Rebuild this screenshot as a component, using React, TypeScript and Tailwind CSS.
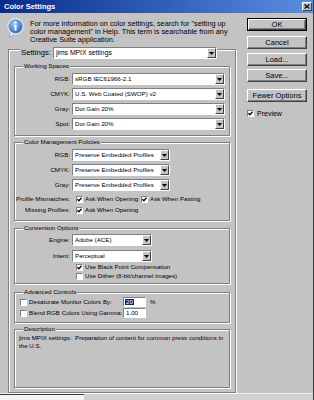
import type { ReactNode } from 'react';

const etched = 'border border-[#808080] shadow-[inset_1px_1px_0_#ffffff,1px_1px_0_#ffffff]';
const sunken = 'border border-t-[#808080] border-l-[#808080] border-b-white border-r-white';
const raised = 'border border-t-white border-l-white border-b-[#404040] border-r-[#404040]';

function Arrow() {
  return (
    <div className={`w-[9px] h-full shrink-0 bg-[#c3c3c3] ${raised} flex items-center justify-center`}>
      <svg width="5" height="3" viewBox="0 0 5 3">
        <path d="M0 0H5L2.5 3Z" fill="#000" />
      </svg>
    </div>
  );
}

function Combo({ value, className = '', text = 'text-[6.2px]' }: { value: string; className?: string; text?: string }) {
  return (
    <div className={`flex h-[12px] bg-white ${sunken} ${className}`}>
      <span className={`flex-1 pl-[2px] leading-[10px] whitespace-nowrap overflow-hidden ${text}`}>{value}</span>
      <Arrow />
    </div>
  );
}

function Check({ on }: { on?: boolean }) {
  return (
    <span className={`w-[7px] h-[7px] shrink-0 bg-white ${sunken} flex items-center justify-center`}>
      {on && (
        <svg width="5" height="5" viewBox="0 0 5 5">
          <path d="M0.4 2.2L1.9 3.8L4.6 0.8" stroke="#000" strokeWidth="1.3" fill="none" />
        </svg>
      )}
    </span>
  );
}

function Group({ title, className = '', children }: { title: string; className?: string; children?: ReactNode }) {
  return (
    <div className={`relative ${etched} ${className}`}>
      <span className="absolute left-[8px] top-[-5px] bg-[#c3c3c3] px-[1px] text-[6.2px] leading-[8px] whitespace-nowrap">
        {title}
      </span>
      {children}
    </div>
  );
}

function Label({ children }: { children: ReactNode }) {
  return <span className="w-[55px] shrink-0 text-right text-[6.2px] leading-none whitespace-nowrap">{children}</span>;
}

function Btn({ label, def, className = '' }: { label: string; def?: boolean; className?: string }) {
  return (
    <div className={`w-[60px] h-[13px] ${def ? 'border border-black' : ''} ${className}`}>
      <div className={`w-full h-full ${raised} shadow-[inset_-1px_-1px_0_#808080] flex items-center justify-center text-[7.5px] leading-none`}>
        {label}
      </div>
    </div>
  );
}

function InfoIcon() {
  return (
    <svg width="17" height="20" viewBox="0 0 17 20" className="shrink-0">
      <defs>
        <radialGradient id="ig" cx="0.4" cy="0.35" r="0.7">
          <stop offset="0" stopColor="#9cc8f4" />
          <stop offset="1" stopColor="#1d5cc4" />
        </radialGradient>
      </defs>
      <path d="M4 13.5L2 19.5L8.5 15.5Z" fill="#e8f0fa" stroke="#7a9cc8" strokeWidth="0.7" />
      <circle cx="8.5" cy="8.2" r="7.6" fill="url(#ig)" stroke="#e6eef8" strokeWidth="1.2" />
      <circle cx="8.5" cy="4.4" r="1.2" fill="#fff" />
      <rect x="7.5" y="6.6" width="2" height="6" fill="#fff" />
    </svg>
  );
}

export default function App() {
  return (
    <div className="w-[314px] h-[400px] overflow-hidden bg-[#c3c3c3] border-r border-r-[#3a3a3a] font-['Liberation_Sans',Arial,sans-serif] text-black">
      <div className="h-[13px] flex items-center justify-between bg-linear-to-r from-[#0a2a8c] to-[#5a8ee0] pl-[4px] pr-[1px]">
        <span className="text-white font-bold text-[7.5px] leading-none">Color Settings</span>
        <div className={`w-[10px] h-[9px] bg-[#c3c3c3] ${raised} flex items-center justify-center`}>
          <svg width="6" height="5" viewBox="0 0 6 5">
            <path d="M0.5 0.5L5.5 4.5M5.5 0.5L0.5 4.5" stroke="#000" strokeWidth="1.2" />
          </svg>
        </div>
      </div>

      <div className="flex h-[380px]">
        <div className="w-[244px] shrink-0">
          <div className="h-[36px] flex pl-[7px] pt-[5px]">
            <InfoIcon />
            <p className="ml-[6px] mt-[2px] text-[7.3px] leading-[8px] whitespace-nowrap">
              For more information on color settings, search for "setting up
              <br />
              color management" in Help. This term is searchable from any
              <br />
              Creative Suite application.
            </p>
          </div>

          <div className={`relative ml-[8px] w-[228px] h-[344px] ${etched} pl-[5px] pt-[16px]`}>
            <div className="absolute left-[11px] top-[-3px] flex items-center bg-[#c3c3c3] pl-[1px]">
              <span className="text-[7.7px] leading-none">Settings:</span>
              <Combo value="jims MPIX settings" className="ml-[2px] w-[164px]" text="text-[6.8px]" />
            </div>

            <Group title="Working Spaces" className="w-[216px] h-[70px] pt-[6px]">
              <div className="flex flex-col gap-[3px]">
                <div className="flex items-center h-[12px]">
                  <Label>RGB:</Label>
                  <Combo value="sRGB IEC61966-2.1" className="ml-[2px] w-[153px]" />
                </div>
                <div className="flex items-center h-[12px]">
                  <Label>CMYK:</Label>
                  <Combo value="U.S. Web Coated (SWOP) v2" className="ml-[2px] w-[153px]" />
                </div>
                <div className="flex items-center h-[12px]">
                  <Label>Gray:</Label>
                  <Combo value="Dot Gain 20%" className="ml-[2px] w-[153px]" />
                </div>
                <div className="flex items-center h-[12px]">
                  <Label>Spot:</Label>
                  <Combo value="Dot Gain 20%" className="ml-[2px] w-[153px]" />
                </div>
              </div>
            </Group>

            <Group title="Color Management Policies" className="mt-[6px] w-[216px] h-[79px] pt-[6px]">
              <div className="flex flex-col gap-[3px]">
                <div className="flex items-center h-[12px]">
                  <Label>RGB:</Label>
                  <Combo value="Preserve Embedded Profiles" className="ml-[2px] w-[98px]" />
                </div>
                <div className="flex items-center h-[12px]">
                  <Label>CMYK:</Label>
                  <Combo value="Preserve Embedded Profiles" className="ml-[2px] w-[98px]" />
                </div>
                <div className="flex items-center h-[12px]">
                  <Label>Gray:</Label>
                  <Combo value="Preserve Embedded Profiles" className="ml-[2px] w-[98px]" />
                </div>
              </div>
              <div className="flex items-center h-[10px] mt-[3px] text-[6.2px] leading-none">
                <Label>Profile Mismatches:</Label>
                <span className="ml-[6px]"><Check on /></span>
                <span className="ml-[2px] w-[56px] whitespace-nowrap">Ask When Opening</span>
                <Check on />
                <span className="ml-[2px] whitespace-nowrap">Ask When Pasting</span>
              </div>
              <div className="flex items-center h-[10px] mt-[1px] text-[6.2px] leading-none">
                <Label>Missing Profiles:</Label>
                <span className="ml-[6px]"><Check on /></span>
                <span className="ml-[2px] whitespace-nowrap">Ask When Opening</span>
              </div>
            </Group>

            <Group title="Conversion Options" className="mt-[7px] w-[216px] h-[56px] pt-[5px]">
              <div className="flex flex-col gap-[4px]">
                <div className="flex items-center h-[12px]">
                  <Label>Engine:</Label>
                  <Combo value="Adobe (ACE)" className="ml-[2px] w-[80px]" />
                </div>
                <div className="flex items-center h-[12px]">
                  <Label>Intent:</Label>
                  <Combo value="Perceptual" className="ml-[2px] w-[80px]" />
                </div>
              </div>
              <div className="flex items-center h-[9px] mt-[1px] pl-[61px] text-[6.2px] leading-none">
                <Check on />
                <span className="ml-[2px] whitespace-nowrap">Use Black Point Compensation</span>
              </div>
              <div className="flex items-center h-[9px] pl-[61px] text-[6.2px] leading-none">
                <Check />
                <span className="ml-[2px] whitespace-nowrap">Use Dither (8-bit/channel images)</span>
              </div>
            </Group>

            <Group title="Advanced Controls" className="mt-[8px] w-[216px] h-[31px] pt-[4px]">
              <div className="flex items-center h-[10px] pl-[5px] text-[6.2px] leading-none">
                <Check />
                <span className="ml-[2px] w-[94px] whitespace-nowrap">Desaturate Monitor Colors By:</span>
                <span className={`w-[23px] h-[10px] bg-white ${sunken} flex items-center`}>
                  <span className="ml-[1px] px-[1px] bg-[#0a246a] text-white">20</span>
                </span>
                <span className="ml-[4px]">%</span>
              </div>
              <div className="flex items-center h-[10px] mt-[1px] pl-[5px] text-[6.2px] leading-none">
                <Check />
                <span className="ml-[2px] w-[94px] whitespace-nowrap">Blend RGB Colors Using Gamma:</span>
                <span className={`w-[23px] h-[10px] bg-white ${sunken} flex items-center pl-[2px]`}>1.00</span>
              </div>
            </Group>

            <Group title="Description" className="mt-[6px] w-[216px] h-[59px] pt-[4px] pl-[4px]">
              <p className="text-[6.2px] leading-[8px] whitespace-pre">
                {'jims MPIX settings:  Preparation of content for common press conditions in\nthe U.S.'}
              </p>
            </Group>
          </div>
        </div>

        <div className="pl-[3px] pt-[5px]">
          <Btn label="OK" def />
          <Btn label="Cancel" className="mt-[5px]" />
          <Btn label="Load..." className="mt-[4px]" />
          <Btn label="Save..." className="mt-[3px]" />
          <Btn label="Fewer Options" className="mt-[7px]" />
          <div className="flex items-center h-[8px] mt-[7px]">
            <Check on />
            <span className="ml-[3px] text-[7px] leading-none">Preview</span>
          </div>
        </div>
      </div>

      <div className="flex h-[7px] border-t border-t-[#ececec]">
        <div className="w-[84px] h-full border-t border-t-[#3a3a3a] bg-[#f2f2f2]" />
        <div className="flex-1 h-full bg-[#d0d0d0]" />
      </div>
    </div>
  );
}
